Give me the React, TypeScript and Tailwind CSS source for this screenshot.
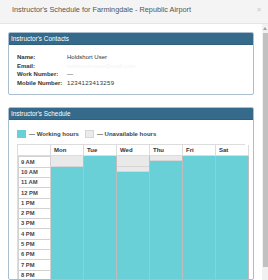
const hours = ["9 AM", "10 AM", "11 AM", "12 PM", "1 PM", "2 PM", "3 PM", "4 PM", "5 PM", "6 PM", "7 PM", "8 PM"];

const days = [
    { name: "Mon", blocks: ["h-[11px]"] },
    { name: "Tue", blocks: [] as string[] },
    { name: "Wed", blocks: ["h-[11px]", "h-[5px]"] },
    { name: "Thu", blocks: ["h-[5px]"] },
    { name: "Fri", blocks: [] as string[] },
    { name: "Sat", blocks: [] as string[] },
];

function Panel({ title, children }: { title: string; children: React.ReactNode }) {
    return (
        <div className="border border-[#a9bfcf] rounded-[2px] overflow-hidden">
            <div className="h-[12px] bg-[#356a8a] border-b border-[#2f5f7c] flex items-center px-[2px] text-[6.4px] text-white">
                {title}
            </div>
            {children}
        </div>
    );
}

export default function App() {
    return (
        <div className="w-[268px] h-[280px] flex flex-col bg-white overflow-hidden font-['Liberation_Sans',Arial,sans-serif]">
            <div className="h-[24px] shrink-0 bg-[#f4f4f4] border-b border-[#e6e6e6] flex items-center justify-between pl-3 pr-[7px] pb-[3px]">
                <span className="text-[7.3px] text-[#555]">Instructor's Schedule for Farmingdale - Republic Airport</span>
                <span className="text-[7px] text-[#cfcfcf] font-bold">×</span>
            </div>

            <div className="flex flex-1 min-h-0">
                <div className="flex-1 overflow-hidden px-2 pt-2 flex flex-col gap-3">
                    <Panel title="Instructor's Contacts">
                        <div className="px-2 py-2 text-[6px] text-[#333] leading-[8.5px]">
                            <div className="flex">
                                <span className="w-[50px] font-bold">Name:</span>
                                <span>Holdshort User</span>
                            </div>
                            <div className="flex">
                                <span className="w-[50px] font-bold">Email:</span>
                                <span className="text-[#f2f4f7]">holdshort.user@mail.com</span>
                            </div>
                            <div className="flex">
                                <span className="w-[50px] font-bold">Work Number:</span>
                                <span>—</span>
                            </div>
                            <div className="flex">
                                <span className="w-[50px] font-bold">Mobile Number:</span>
                                <span className="tracking-[0.3px]">1234123413259</span>
                            </div>
                        </div>
                    </Panel>

                    <Panel title="Instructor's Schedule">
                        <div className="px-2 pt-2">
                            <div className="h-[12px] flex items-center text-[6px] font-bold text-[#444] mb-1">
                                <span className="w-[9px] h-[8px] bg-[#68d0d6] mr-[3px]" />
                                <span>— Working hours</span>
                                <span className="w-[9px] h-[8px] bg-[#ebebeb] border border-[#d5d5d5] ml-[6px] mr-[3px]" />
                                <span>— Unavailable hours</span>
                            </div>

                            <div className="grid grid-cols-[33px_repeat(6,33px)] border-t border-l border-[#dcdcdc] text-[6px] text-[#333]">
                                <div className="h-[11px] border-r border-b border-[#dcdcdc]" />
                                {days.map((d) => (
                                    <div key={d.name} className="h-[11px] border-r border-b border-[#dcdcdc] pl-[3px] font-bold flex items-center">
                                        {d.name}
                                    </div>
                                ))}

                                <div className="flex flex-col">
                                    {hours.map((h) => (
                                        <div key={h} className="h-[11.3px] border border-[#d2d2d2] -mt-px first:mt-0 pl-[2px] flex items-center font-bold text-[5.8px] text-[#444]">
                                            {h}
                                        </div>
                                    ))}
                                </div>
                                {days.map((d) => (
                                    <div key={d.name} className="flex flex-col border-r border-[#bdbdbd]">
                                        {d.blocks.map((b, i) => (
                                            <div key={i} className={`${b} bg-[#e9e9e9] border-b border-[#d6d6d6]`} />
                                        ))}
                                        <div className="flex-1 bg-[#68d0d6]" />
                                    </div>
                                ))}
                            </div>
                        </div>
                    </Panel>
                </div>

                <div className="w-[6px] shrink-0 bg-[#f1f1f1] flex flex-col items-center pt-[3px]">
                    <div className="w-0 h-0 border-l-[2.5px] border-r-[2.5px] border-b-[3px] border-l-transparent border-r-transparent border-b-[#a3a3a3]" />
                    <div className="w-[5px] h-[234px] mt-[3px] bg-[#c1c1c1]" />
                </div>
            </div>
        </div>
    );
}
